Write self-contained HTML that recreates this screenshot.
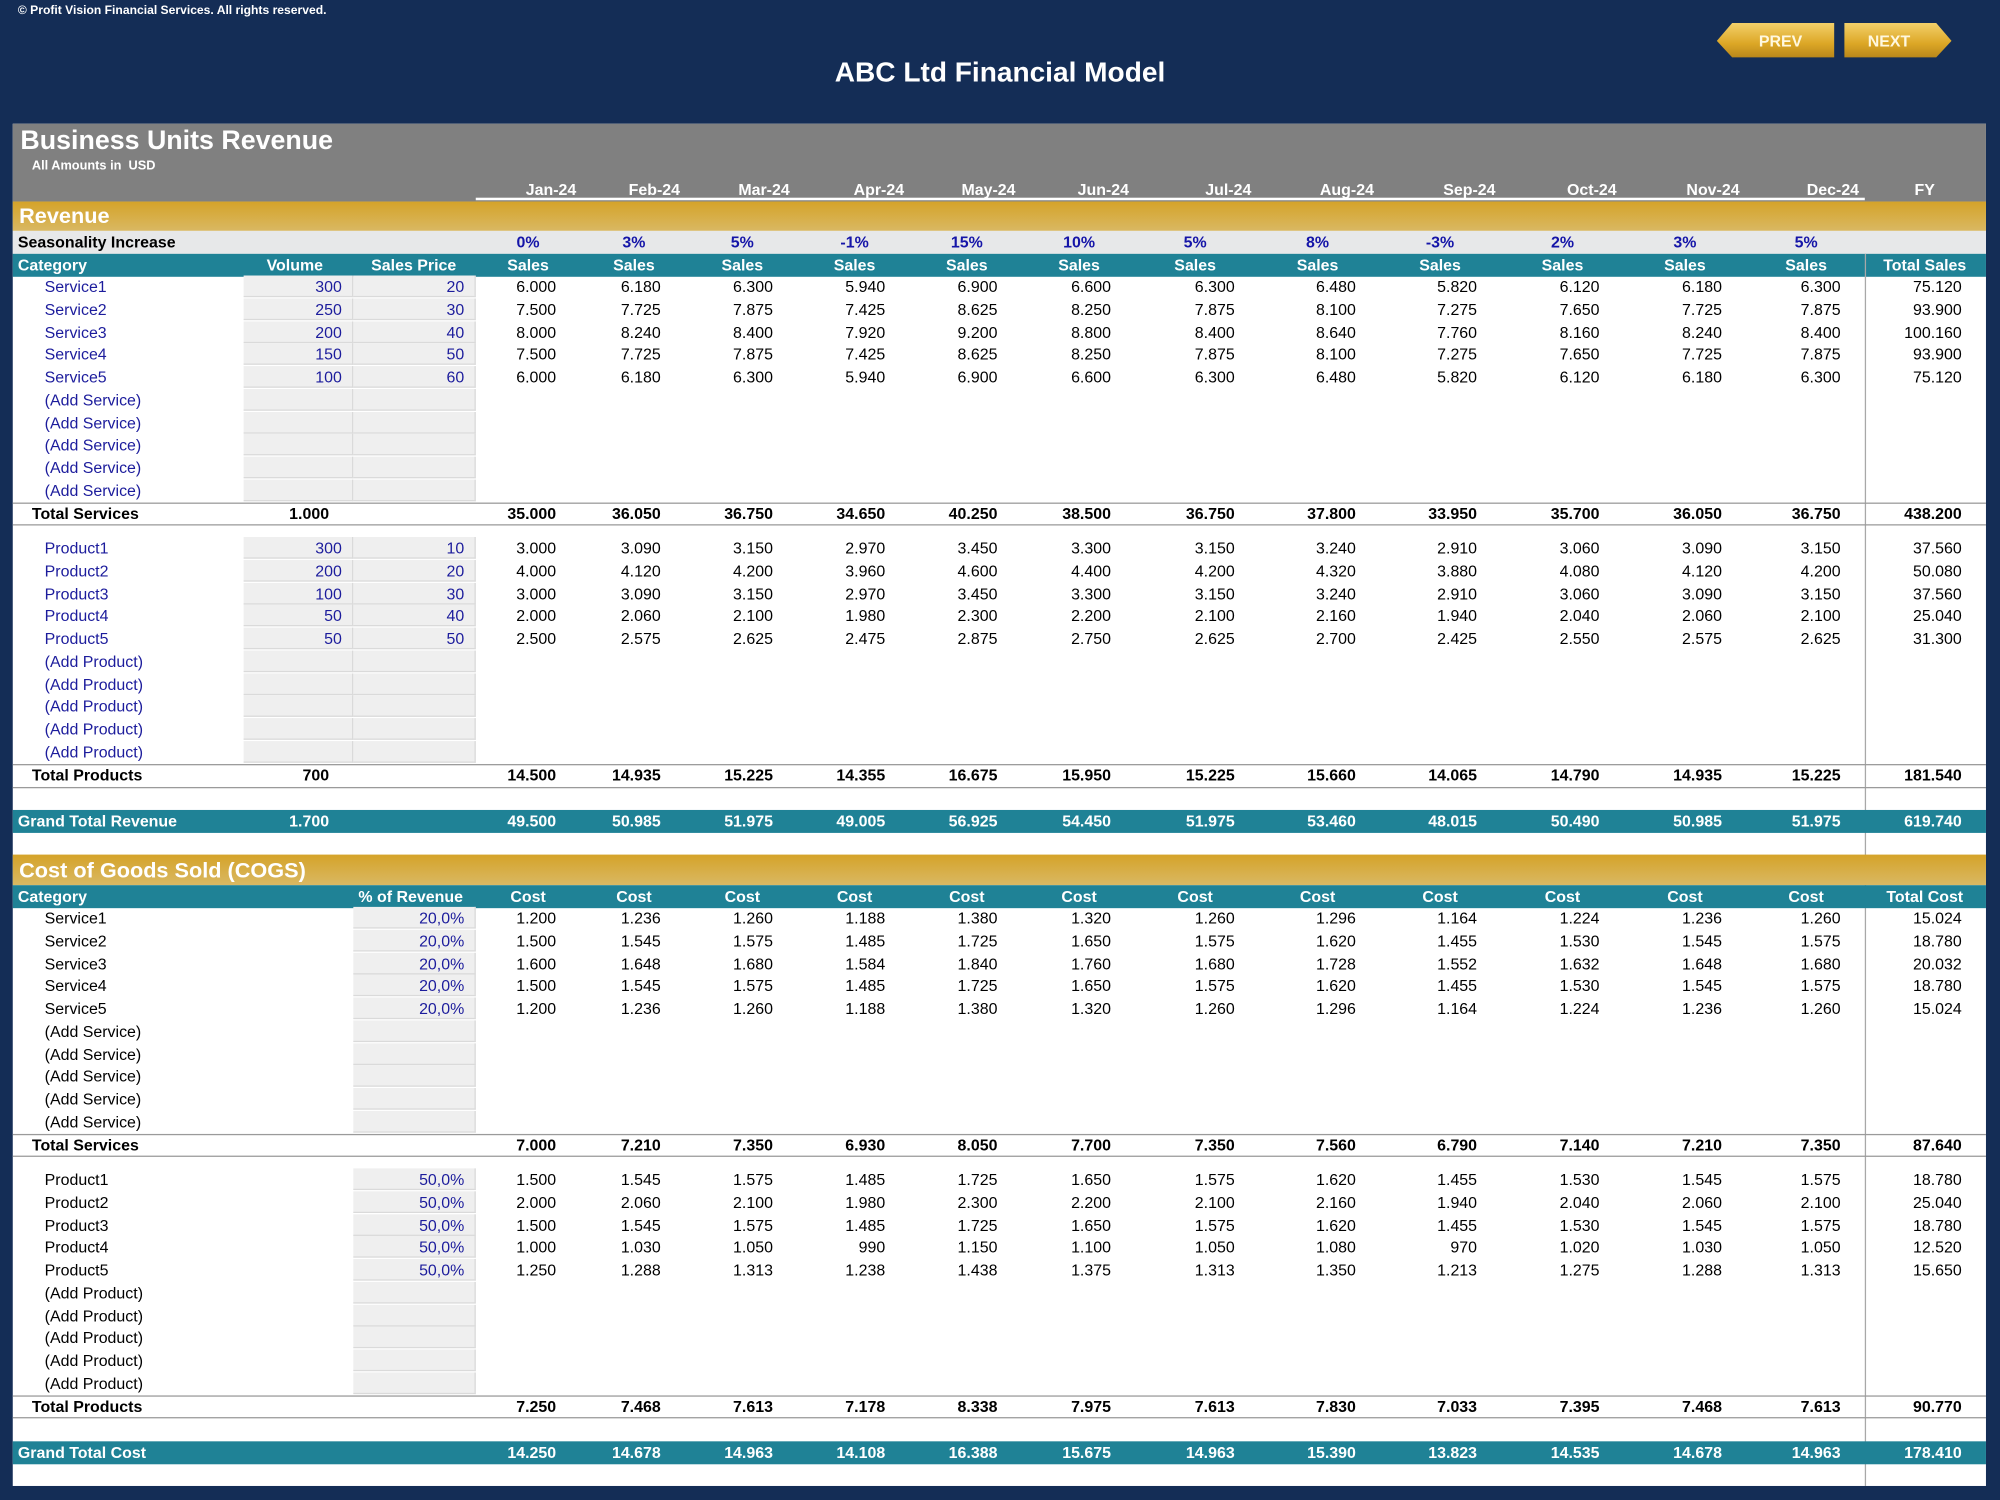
<!DOCTYPE html>
<html><head><meta charset="utf-8"><style>
html,body{margin:0;padding:0}
body{width:2000px;height:1500px;overflow:hidden;background:#142d56;position:relative}
#w{position:absolute;left:0;top:0;width:1568px;height:1176px;transform:scale(1.27551);transform-origin:0 0;font-family:"Liberation Sans",Arial,sans-serif;font-size:12.5px;color:#000}
.a{position:absolute}
.r{position:absolute;left:0;width:1568px;height:18px;line-height:18px}
.r>*{position:absolute;top:0;white-space:nowrap}
.r i{font-style:normal;width:90px;text-align:right}
.r i:nth-of-type(1){left:346px}.r i:nth-of-type(2){left:428px}.r i:nth-of-type(3){left:516px}.r i:nth-of-type(4){left:604px}.r i:nth-of-type(5){left:692px}.r i:nth-of-type(6){left:781px}.r i:nth-of-type(7){left:878px}.r i:nth-of-type(8){left:973px}.r i:nth-of-type(9){left:1068px}.r i:nth-of-type(10){left:1164px}.r i:nth-of-type(11){left:1260px}.r i:nth-of-type(12){left:1353px}.r i:nth-of-type(13){left:1448px}
.r u{text-decoration:none;width:100px;text-align:center}
.r u:nth-of-type(1){left:364px}.r u:nth-of-type(2){left:447px}.r u:nth-of-type(3){left:532px}.r u:nth-of-type(4){left:620px}.r u:nth-of-type(5){left:708px}.r u:nth-of-type(6){left:796px}.r u:nth-of-type(7){left:887px}.r u:nth-of-type(8){left:983px}.r u:nth-of-type(9){left:1079px}.r u:nth-of-type(10){left:1175px}.r u:nth-of-type(11){left:1271px}.r u:nth-of-type(12){left:1366px}.r u:nth-of-type(13){left:1459px}
.mh u:nth-of-type(1){left:382px}.mh u:nth-of-type(2){left:463px}.mh u:nth-of-type(3){left:549px}.mh u:nth-of-type(4){left:639px}.mh u:nth-of-type(5){left:725px}.mh u:nth-of-type(6){left:815px}.mh u:nth-of-type(7){left:913px}.mh u:nth-of-type(8){left:1006px}.mh u:nth-of-type(9){left:1102px}.mh u:nth-of-type(10){left:1198px}.mh u:nth-of-type(11){left:1293px}.mh u:nth-of-type(12){left:1387px}.mh u:nth-of-type(13){left:1459px}
.l{left:35px;color:#1c1c9c}
.k{left:35px}
.t{left:25px;font-weight:bold}
.b{font-weight:bold}
.v,.p{height:17px;box-sizing:border-box;background:#efefef;border-bottom:1px solid #dadada;border-right:1px solid #dadada;text-align:right;color:#1c1c9c;padding-right:8px}
.v{left:191px;width:86px}.p{left:277px;width:96px}
.tv{left:160px;width:98px;text-align:right;font-weight:bold}
.bold i{font-weight:bold}
.hd{color:#fff;font-weight:bold}
.gt{color:#fff;font-weight:bold}
.gt i{font-weight:bold}
.sp u{color:#1515a8;font-weight:bold}
.hl{position:absolute;left:10px;width:1547px;height:1px;background:#9a9a9a}
.gold{position:absolute;left:10px;width:1547px;background:linear-gradient(#d5a329,#d9b863);color:#fff;font-weight:bold;font-size:17px;box-sizing:border-box;padding-left:5px}
.teal{position:absolute;left:10px;width:1547px;height:18px;background:#1f8296}
</style></head><body><div id="w">
<div class="a" style="left:14px;top:3px;color:#fff;font-weight:bold;font-size:9.5px">© Profit Vision Financial Services. All rights reserved.</div>
<div class="a" style="left:0;width:1568px;top:44px;text-align:center;color:#fff;font-weight:bold;font-size:22px">ABC Ltd Financial Model</div>
<svg class="a" style="left:1340px;top:14px" width="200" height="36" viewBox="0 0 200 36">
<defs><linearGradient id="g" x1="0" y1="0" x2="0" y2="1"><stop offset="0" stop-color="#f3d06a"/><stop offset="0.6" stop-color="#dca726"/><stop offset="1" stop-color="#b9871a"/></linearGradient></defs>
<polygon points="6,18 18,4 98,4 98,31 18,31" fill="url(#g)"/>
<polygon points="106,4 178,4 190,18 178,31 106,31" fill="url(#g)"/>
<text x="56" y="22.5" text-anchor="middle" fill="#fff8e0" font-family="Liberation Sans" font-weight="bold" font-size="12.5">PREV</text>
<text x="141" y="22.5" text-anchor="middle" fill="#fff8e0" font-family="Liberation Sans" font-weight="bold" font-size="12.5">NEXT</text>
</svg>
<div class="a" style="left:10px;top:97px;width:1547px;height:1068px;background:#fff"></div>
<div class="a" style="left:10px;top:97px;width:1547px;height:61px;background:#808080"></div>
<div class="a" style="left:16px;top:99px;color:#fff;font-weight:bold;font-size:21px">Business Units Revenue</div>
<div class="a" style="left:25px;top:125px;color:#fff;font-weight:bold;font-size:10px">All Amounts in &nbsp;USD</div>
<div class="a" style="left:373px;top:155px;width:1089px;height:2px;background:#fff"></div>
<div class="r mh hd" style="top:140px"><u>Jan-24</u><u>Feb-24</u><u>Mar-24</u><u>Apr-24</u><u>May-24</u><u>Jun-24</u><u>Jul-24</u><u>Aug-24</u><u>Sep-24</u><u>Oct-24</u><u>Nov-24</u><u>Dec-24</u><u>FY</u></div>
<div class="gold" style="top:158px;height:23px;line-height:24px">Revenue</div>
<div class="a" style="left:10px;top:181px;width:1547px;height:18px;background:#e7e8e9"></div>
<div class="r sp" style="top:181px"><span class="b" style="left:14px">Seasonality Increase</span><u>0%</u><u>3%</u><u>5%</u><u>-1%</u><u>15%</u><u>10%</u><u>5%</u><u>8%</u><u>-3%</u><u>2%</u><u>3%</u><u>5%</u></div>
<div class="teal" style="top:199px"></div>
<div class="r hd" style="top:199px"><span style="left:14px">Category</span><span style="left:209px">Volume</span><span style="left:291px">Sales Price</span><u>Sales</u><u>Sales</u><u>Sales</u><u>Sales</u><u>Sales</u><u>Sales</u><u>Sales</u><u>Sales</u><u>Sales</u><u>Sales</u><u>Sales</u><u>Sales</u><u>Total Sales</u></div>
<div class="a" style="left:1462px;top:199px;width:1px;height:966px;background:#a8a8a8"></div>

<div class="r" style="top:216px"><span class="l">Service1</span><span class="v">300</span><span class="p">20</span><i>6.000</i><i>6.180</i><i>6.300</i><i>5.940</i><i>6.900</i><i>6.600</i><i>6.300</i><i>6.480</i><i>5.820</i><i>6.120</i><i>6.180</i><i>6.300</i><i>75.120</i></div>
<div class="r" style="top:233.75px"><span class="l">Service2</span><span class="v">250</span><span class="p">30</span><i>7.500</i><i>7.725</i><i>7.875</i><i>7.425</i><i>8.625</i><i>8.250</i><i>7.875</i><i>8.100</i><i>7.275</i><i>7.650</i><i>7.725</i><i>7.875</i><i>93.900</i></div>
<div class="r" style="top:251.5px"><span class="l">Service3</span><span class="v">200</span><span class="p">40</span><i>8.000</i><i>8.240</i><i>8.400</i><i>7.920</i><i>9.200</i><i>8.800</i><i>8.400</i><i>8.640</i><i>7.760</i><i>8.160</i><i>8.240</i><i>8.400</i><i>100.160</i></div>
<div class="r" style="top:269.25px"><span class="l">Service4</span><span class="v">150</span><span class="p">50</span><i>7.500</i><i>7.725</i><i>7.875</i><i>7.425</i><i>8.625</i><i>8.250</i><i>7.875</i><i>8.100</i><i>7.275</i><i>7.650</i><i>7.725</i><i>7.875</i><i>93.900</i></div>
<div class="r" style="top:287px"><span class="l">Service5</span><span class="v">100</span><span class="p">60</span><i>6.000</i><i>6.180</i><i>6.300</i><i>5.940</i><i>6.900</i><i>6.600</i><i>6.300</i><i>6.480</i><i>5.820</i><i>6.120</i><i>6.180</i><i>6.300</i><i>75.120</i></div>
<div class="r" style="top:304.75px"><span class="l">(Add Service)</span><span class="v"></span><span class="p"></span></div>
<div class="r" style="top:322.5px"><span class="l">(Add Service)</span><span class="v"></span><span class="p"></span></div>
<div class="r" style="top:340.25px"><span class="l">(Add Service)</span><span class="v"></span><span class="p"></span></div>
<div class="r" style="top:358px"><span class="l">(Add Service)</span><span class="v"></span><span class="p"></span></div>
<div class="r" style="top:375.75px"><span class="l">(Add Service)</span><span class="v"></span><span class="p"></span></div>
<div class="hl" style="top:394px"></div><div class="hl" style="top:411px"></div>
<div class="r bold" style="top:394px"><span class="t">Total Services</span><span class="tv">1.000</span><i>35.000</i><i>36.050</i><i>36.750</i><i>34.650</i><i>40.250</i><i>38.500</i><i>36.750</i><i>37.800</i><i>33.950</i><i>35.700</i><i>36.050</i><i>36.750</i><i>438.200</i></div>

<div class="r" style="top:421px"><span class="l">Product1</span><span class="v">300</span><span class="p">10</span><i>3.000</i><i>3.090</i><i>3.150</i><i>2.970</i><i>3.450</i><i>3.300</i><i>3.150</i><i>3.240</i><i>2.910</i><i>3.060</i><i>3.090</i><i>3.150</i><i>37.560</i></div>
<div class="r" style="top:438.75px"><span class="l">Product2</span><span class="v">200</span><span class="p">20</span><i>4.000</i><i>4.120</i><i>4.200</i><i>3.960</i><i>4.600</i><i>4.400</i><i>4.200</i><i>4.320</i><i>3.880</i><i>4.080</i><i>4.120</i><i>4.200</i><i>50.080</i></div>
<div class="r" style="top:456.5px"><span class="l">Product3</span><span class="v">100</span><span class="p">30</span><i>3.000</i><i>3.090</i><i>3.150</i><i>2.970</i><i>3.450</i><i>3.300</i><i>3.150</i><i>3.240</i><i>2.910</i><i>3.060</i><i>3.090</i><i>3.150</i><i>37.560</i></div>
<div class="r" style="top:474.25px"><span class="l">Product4</span><span class="v">50</span><span class="p">40</span><i>2.000</i><i>2.060</i><i>2.100</i><i>1.980</i><i>2.300</i><i>2.200</i><i>2.100</i><i>2.160</i><i>1.940</i><i>2.040</i><i>2.060</i><i>2.100</i><i>25.040</i></div>
<div class="r" style="top:492px"><span class="l">Product5</span><span class="v">50</span><span class="p">50</span><i>2.500</i><i>2.575</i><i>2.625</i><i>2.475</i><i>2.875</i><i>2.750</i><i>2.625</i><i>2.700</i><i>2.425</i><i>2.550</i><i>2.575</i><i>2.625</i><i>31.300</i></div>
<div class="r" style="top:509.75px"><span class="l">(Add Product)</span><span class="v"></span><span class="p"></span></div>
<div class="r" style="top:527.5px"><span class="l">(Add Product)</span><span class="v"></span><span class="p"></span></div>
<div class="r" style="top:545.25px"><span class="l">(Add Product)</span><span class="v"></span><span class="p"></span></div>
<div class="r" style="top:563px"><span class="l">(Add Product)</span><span class="v"></span><span class="p"></span></div>
<div class="r" style="top:580.75px"><span class="l">(Add Product)</span><span class="v"></span><span class="p"></span></div>
<div class="hl" style="top:599px"></div><div class="hl" style="top:617px"></div>
<div class="r bold" style="top:599px"><span class="t">Total Products</span><span class="tv">700</span><i>14.500</i><i>14.935</i><i>15.225</i><i>14.355</i><i>16.675</i><i>15.950</i><i>15.225</i><i>15.660</i><i>14.065</i><i>14.790</i><i>14.935</i><i>15.225</i><i>181.540</i></div>

<div class="teal" style="top:635px"></div>
<div class="r gt" style="top:635px"><span style="left:14px">Grand Total Revenue</span><span class="tv">1.700</span><i>49.500</i><i>50.985</i><i>51.975</i><i>49.005</i><i>56.925</i><i>54.450</i><i>51.975</i><i>53.460</i><i>48.015</i><i>50.490</i><i>50.985</i><i>51.975</i><i>619.740</i></div>

<div class="gold" style="top:670px;height:24px;line-height:25px">Cost of Goods Sold (COGS)</div>
<div class="teal" style="top:694px"></div>
<div class="r hd" style="top:693.5px"><span style="left:14px">Category</span><span style="left:281px">% of Revenue</span><u>Cost</u><u>Cost</u><u>Cost</u><u>Cost</u><u>Cost</u><u>Cost</u><u>Cost</u><u>Cost</u><u>Cost</u><u>Cost</u><u>Cost</u><u>Cost</u><u>Total Cost</u></div>

<div class="r" style="top:711px"><span class="k">Service1</span><span class="p">20,0%</span><i>1.200</i><i>1.236</i><i>1.260</i><i>1.188</i><i>1.380</i><i>1.320</i><i>1.260</i><i>1.296</i><i>1.164</i><i>1.224</i><i>1.236</i><i>1.260</i><i>15.024</i></div>
<div class="r" style="top:728.75px"><span class="k">Service2</span><span class="p">20,0%</span><i>1.500</i><i>1.545</i><i>1.575</i><i>1.485</i><i>1.725</i><i>1.650</i><i>1.575</i><i>1.620</i><i>1.455</i><i>1.530</i><i>1.545</i><i>1.575</i><i>18.780</i></div>
<div class="r" style="top:746.5px"><span class="k">Service3</span><span class="p">20,0%</span><i>1.600</i><i>1.648</i><i>1.680</i><i>1.584</i><i>1.840</i><i>1.760</i><i>1.680</i><i>1.728</i><i>1.552</i><i>1.632</i><i>1.648</i><i>1.680</i><i>20.032</i></div>
<div class="r" style="top:764.25px"><span class="k">Service4</span><span class="p">20,0%</span><i>1.500</i><i>1.545</i><i>1.575</i><i>1.485</i><i>1.725</i><i>1.650</i><i>1.575</i><i>1.620</i><i>1.455</i><i>1.530</i><i>1.545</i><i>1.575</i><i>18.780</i></div>
<div class="r" style="top:782px"><span class="k">Service5</span><span class="p">20,0%</span><i>1.200</i><i>1.236</i><i>1.260</i><i>1.188</i><i>1.380</i><i>1.320</i><i>1.260</i><i>1.296</i><i>1.164</i><i>1.224</i><i>1.236</i><i>1.260</i><i>15.024</i></div>
<div class="r" style="top:799.75px"><span class="k">(Add Service)</span><span class="p"></span></div>
<div class="r" style="top:817.5px"><span class="k">(Add Service)</span><span class="p"></span></div>
<div class="r" style="top:835.25px"><span class="k">(Add Service)</span><span class="p"></span></div>
<div class="r" style="top:853px"><span class="k">(Add Service)</span><span class="p"></span></div>
<div class="r" style="top:870.75px"><span class="k">(Add Service)</span><span class="p"></span></div>
<div class="hl" style="top:889px"></div><div class="hl" style="top:906px"></div>
<div class="r bold" style="top:888.5px"><span class="t">Total Services</span><i>7.000</i><i>7.210</i><i>7.350</i><i>6.930</i><i>8.050</i><i>7.700</i><i>7.350</i><i>7.560</i><i>6.790</i><i>7.140</i><i>7.210</i><i>7.350</i><i>87.640</i></div>

<div class="r" style="top:916px"><span class="k">Product1</span><span class="p">50,0%</span><i>1.500</i><i>1.545</i><i>1.575</i><i>1.485</i><i>1.725</i><i>1.650</i><i>1.575</i><i>1.620</i><i>1.455</i><i>1.530</i><i>1.545</i><i>1.575</i><i>18.780</i></div>
<div class="r" style="top:933.75px"><span class="k">Product2</span><span class="p">50,0%</span><i>2.000</i><i>2.060</i><i>2.100</i><i>1.980</i><i>2.300</i><i>2.200</i><i>2.100</i><i>2.160</i><i>1.940</i><i>2.040</i><i>2.060</i><i>2.100</i><i>25.040</i></div>
<div class="r" style="top:951.5px"><span class="k">Product3</span><span class="p">50,0%</span><i>1.500</i><i>1.545</i><i>1.575</i><i>1.485</i><i>1.725</i><i>1.650</i><i>1.575</i><i>1.620</i><i>1.455</i><i>1.530</i><i>1.545</i><i>1.575</i><i>18.780</i></div>
<div class="r" style="top:969.25px"><span class="k">Product4</span><span class="p">50,0%</span><i>1.000</i><i>1.030</i><i>1.050</i><i>990</i><i>1.150</i><i>1.100</i><i>1.050</i><i>1.080</i><i>970</i><i>1.020</i><i>1.030</i><i>1.050</i><i>12.520</i></div>
<div class="r" style="top:987px"><span class="k">Product5</span><span class="p">50,0%</span><i>1.250</i><i>1.288</i><i>1.313</i><i>1.238</i><i>1.438</i><i>1.375</i><i>1.313</i><i>1.350</i><i>1.213</i><i>1.275</i><i>1.288</i><i>1.313</i><i>15.650</i></div>
<div class="r" style="top:1004.75px"><span class="k">(Add Product)</span><span class="p"></span></div>
<div class="r" style="top:1022.5px"><span class="k">(Add Product)</span><span class="p"></span></div>
<div class="r" style="top:1040.25px"><span class="k">(Add Product)</span><span class="p"></span></div>
<div class="r" style="top:1058px"><span class="k">(Add Product)</span><span class="p"></span></div>
<div class="r" style="top:1075.75px"><span class="k">(Add Product)</span><span class="p"></span></div>
<div class="hl" style="top:1094px"></div><div class="hl" style="top:1111px"></div>
<div class="r bold" style="top:1093.5px"><span class="t">Total Products</span><i>7.250</i><i>7.468</i><i>7.613</i><i>7.178</i><i>8.338</i><i>7.975</i><i>7.613</i><i>7.830</i><i>7.033</i><i>7.395</i><i>7.468</i><i>7.613</i><i>90.770</i></div>

<div class="teal" style="top:1130px"></div>
<div class="r gt" style="top:1129.5px"><span style="left:14px">Grand Total Cost</span><i>14.250</i><i>14.678</i><i>14.963</i><i>14.108</i><i>16.388</i><i>15.675</i><i>14.963</i><i>15.390</i><i>13.823</i><i>14.535</i><i>14.678</i><i>14.963</i><i>178.410</i></div>
</div></body></html>
